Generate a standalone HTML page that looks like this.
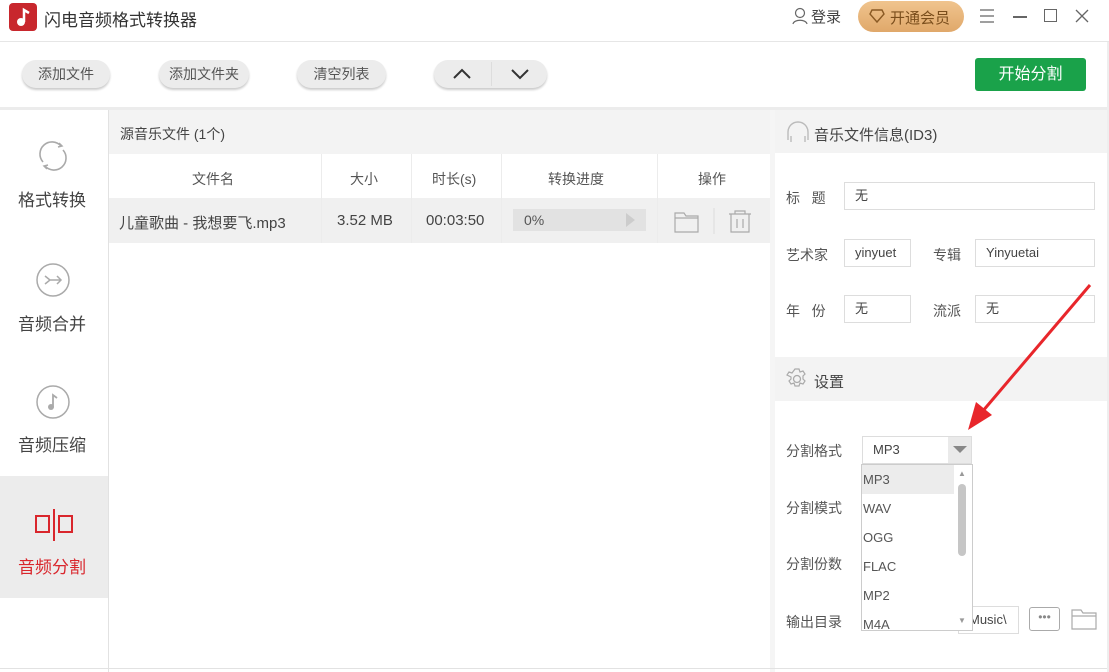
<!DOCTYPE html>
<html><head><meta charset="utf-8"><style>
*{margin:0;padding:0;box-sizing:border-box}
body{width:1109px;height:672px;overflow:hidden;background:#fff;font-family:"Liberation Sans","Noto Sans CJK SC",sans-serif;color:#333;position:relative;font-size:14px}
.a{position:absolute}
.btn{position:absolute;top:60px;height:28px;border-radius:14px;background:#ececec;box-shadow:0 2px 2px #ccc;font-size:14px;color:#555;text-align:center;line-height:28px}
.inp{position:absolute;height:28px;border:1px solid #ddd;background:#fff;font-size:13px;line-height:26px;padding-left:10px;color:#444}
.lbl{position:absolute;font-size:14px;color:#555}
.opt{position:absolute;left:863px;font-size:13px;color:#555}
</style></head><body>
<div class="a" style="left:9px;top:3px;width:28px;height:28px;background:#c8272d;border-radius:4px"></div>
<svg class="a" style="left:9px;top:3px" width="28" height="28"><circle cx="12" cy="19" r="4" fill="#fff"/><path d="M15 19V7l5 3" stroke="#fff" stroke-width="2.5" fill="none"/></svg>
<div class="a" style="left:44px;top:6px;font-size:17px;color:#333">闪电音频格式转换器</div>
<svg class="a" style="left:792px;top:7px" width="16" height="18"><circle cx="8" cy="6" r="4.5" stroke="#666" fill="none" stroke-width="1.2"/><path d="M1 17c1-5 13-5 14 0" stroke="#666" fill="none" stroke-width="1.2"/></svg>
<div class="a" style="left:811px;top:6px;font-size:15px;color:#444">登录</div>
<div class="a" style="left:858px;top:1px;width:106px;height:31px;border-radius:16px;background:linear-gradient(#f0c48e,#e0a86a)"></div>
<svg class="a" style="left:869px;top:8px" width="16" height="16"><path d="M3 2h10l2 4-7 8-7-8z" stroke="#8a5a24" fill="none" stroke-width="1.4"/></svg>
<div class="a" style="left:890px;top:7px;font-size:15px;color:#7a4e1c">开通会员</div>
<svg class="a" style="left:980px;top:9px" width="14" height="14"><path d="M0 1h14M0 7h14M0 13h14" stroke="#666" stroke-width="1.2"/></svg>
<div class="a" style="left:1013px;top:16px;width:14px;height:1.5px;background:#666"></div>
<div class="a" style="left:1044px;top:9px;width:13px;height:13px;border:1.3px solid #666"></div>
<svg class="a" style="left:1075px;top:9px" width="14" height="14"><path d="M1 1l12 12M13 1L1 13" stroke="#666" stroke-width="1.3"/></svg>
<div class="a" style="left:0;top:41px;width:1109px;height:1px;background:#e6e6e6"></div>
<div class="btn" style="left:22px;width:88px">添加文件</div>
<div class="btn" style="left:159px;width:90px">添加文件夹</div>
<div class="btn" style="left:297px;width:89px">清空列表</div>
<div class="btn" style="left:434px;width:113px"></div>
<div class="a" style="left:491px;top:62px;width:1px;height:24px;background:#ddd"></div>
<svg class="a" style="left:452px;top:66px" width="80" height="16"><path d="M2 12l8-8 8 8M60 4l8 8 8-8" stroke="#333" stroke-width="2" fill="none"/></svg>
<div class="a" style="left:975px;top:58px;width:111px;height:33px;background:#1aa24a;border-radius:3px;color:#fff;font-size:16px;text-align:center;line-height:33px">开始分割</div>
<div class="a" style="left:0;top:107px;width:1109px;height:3px;background:#ececec"></div>
<div class="a" style="left:0;top:110px;width:108px;height:562px;background:#fff"></div>
<div class="a" style="left:108px;top:110px;width:1px;height:562px;background:#e2e2e2"></div>
<svg class="a" style="left:35px;top:138px" width="36" height="36"><path d="M8 24A12 12 0 0 1 26 8M28 12A12 12 0 0 1 10 28" stroke="#aaa" stroke-width="1.6" fill="none"/><path d="M24 5l3 3-4 1M12 31l-3-3 4-1" stroke="#aaa" stroke-width="1.5" fill="none"/></svg>
<div class="a" style="left:18px;top:186px;font-size:17px;color:#444">格式转换</div>
<svg class="a" style="left:35px;top:262px" width="36" height="36"><circle cx="18" cy="18" r="16" stroke="#aaa" stroke-width="1.5" fill="none"/><path d="M10 14l5 4-5 4M14 18h12M22 14l4 4-4 4" stroke="#aaa" stroke-width="1.5" fill="none"/></svg>
<div class="a" style="left:18px;top:310px;font-size:17px;color:#444">音频合并</div>
<svg class="a" style="left:35px;top:384px" width="36" height="36"><circle cx="18" cy="18" r="16" stroke="#aaa" stroke-width="1.5" fill="none"/><circle cx="16" cy="23" r="3" fill="#aaa"/><path d="M18 23V11l4 3" stroke="#aaa" stroke-width="1.8" fill="none"/></svg>
<div class="a" style="left:18px;top:431px;font-size:17px;color:#444">音频压缩</div>
<div class="a" style="left:0;top:476px;width:108px;height:122px;background:#ececec"></div>
<svg class="a" style="left:34px;top:508px" width="40" height="34"><rect x="2" y="8" width="13" height="16" stroke="#d9262c" stroke-width="2" fill="none"/><rect x="25" y="8" width="13" height="16" stroke="#d9262c" stroke-width="2" fill="none"/><path d="M20 1v32" stroke="#d9262c" stroke-width="2"/></svg>
<div class="a" style="left:18px;top:553px;font-size:17px;color:#d9262c">音频分割</div>
<div class="a" style="left:109px;top:110px;width:661px;height:44px;background:#f3f3f3"></div>
<div class="a" style="left:120px;top:124px;font-size:14px;color:#444">源音乐文件 (1个)</div>
<div class="a" style="left:109px;top:198px;width:661px;height:45px;background:#f0f0f0"></div>
<div class="a" style="left:321px;top:154px;width:1px;height:89px;background:#ececec"></div>
<div class="a" style="left:411px;top:154px;width:1px;height:89px;background:#ececec"></div>
<div class="a" style="left:501px;top:154px;width:1px;height:89px;background:#ececec"></div>
<div class="a" style="left:657px;top:154px;width:1px;height:89px;background:#ececec"></div>
<div class="a" style="left:192px;top:169px;font-size:14px;color:#555">文件名</div>
<div class="a" style="left:350px;top:169px;font-size:14px;color:#555">大小</div>
<div class="a" style="left:432px;top:169px;font-size:14px;color:#555">时长(s)</div>
<div class="a" style="left:548px;top:169px;font-size:14px;color:#555">转换进度</div>
<div class="a" style="left:698px;top:169px;font-size:14px;color:#555">操作</div>
<div class="a" style="left:119px;top:212px;font-size:15px;color:#444">儿童歌曲 - 我想要飞.mp3</div>
<div class="a" style="left:337px;top:212px;font-size:15px;color:#444">3.52 MB</div>
<div class="a" style="left:426px;top:212px;font-size:15px;color:#444">00:03:50</div>
<div class="a" style="left:513px;top:209px;width:133px;height:22px;background:#e2e2e2"></div>
<div class="a" style="left:524px;top:212px;font-size:14px;color:#555">0%</div>
<div class="a" style="left:626px;top:213px;width:0;height:0;border-left:9px solid #ccc;border-top:7px solid transparent;border-bottom:7px solid transparent"></div>
<svg class="a" style="left:674px;top:208px" width="80" height="26"><path d="M1 5h9l2 3h12v16H1z" stroke="#aaa" stroke-width="1.2" fill="none"/><path d="M1 10h23" stroke="#aaa" stroke-width="1.2"/><path d="M40 0v26" stroke="#ddd"/><path d="M55 6h22M61 6V3h10v3M57 6v18h18V6M63 11v9M69 11v9" stroke="#aaa" stroke-width="1.2" fill="none"/></svg>
<div class="a" style="left:770px;top:110px;width:5px;height:562px;background:#f5f5f5"></div>
<div class="a" style="left:775px;top:110px;width:332px;height:43px;background:#f3f3f3"></div>
<svg class="a" style="left:786px;top:120px" width="24" height="24"><path d="M2 20v-8a10 10 0 0 1 20 0v8" stroke="#bbb" stroke-width="1.4" fill="none"/><path d="M5 16v6M19 16v6" stroke="#bbb" stroke-width="1.4"/></svg>
<div class="a" style="left:814px;top:124px;font-size:15px;color:#444">音乐文件信息(ID3)</div>
<div class="lbl" style="left:786px;top:188px">标&nbsp;&nbsp;&nbsp;题</div>
<div class="inp" style="left:844px;top:182px;width:251px">无</div>
<div class="lbl" style="left:786px;top:245px">艺术家</div>
<div class="inp" style="left:844px;top:239px;width:67px">yinyuet</div>
<div class="lbl" style="left:933px;top:245px">专辑</div>
<div class="inp" style="left:975px;top:239px;width:120px">Yinyuetai</div>
<div class="lbl" style="left:786px;top:301px">年&nbsp;&nbsp;&nbsp;份</div>
<div class="inp" style="left:844px;top:295px;width:67px">无</div>
<div class="lbl" style="left:933px;top:301px">流派</div>
<div class="inp" style="left:975px;top:295px;width:120px">无</div>
<div class="a" style="left:775px;top:357px;width:332px;height:44px;background:#f3f3f3"></div>
<svg class="a" style="left:786px;top:368px" width="22" height="22"><circle cx="11" cy="11" r="3.5" stroke="#aaa" fill="none" stroke-width="1.3"/><path d="M9 1h4l1 3 3-1 2 3-2 2 0 3 2 2-2 3-3-1-1 3h-4l-1-3-3 1-2-3 2-2V9L1 7l2-3 3 1z" stroke="#aaa" fill="none" stroke-width="1.2"/></svg>
<div class="a" style="left:814px;top:371px;font-size:15px;color:#444">设置</div>
<div class="lbl" style="left:786px;top:441px">分割格式</div>
<div class="lbl" style="left:786px;top:498px">分割模式</div>
<div class="lbl" style="left:786px;top:554px">分割份数</div>
<div class="lbl" style="left:786px;top:612px">输出目录</div>
<div class="inp" style="left:862px;top:436px;width:110px;height:28px">MP3</div>
<div class="a" style="left:948px;top:437px;width:23px;height:26px;background:#eaeaea"></div>
<div class="a" style="left:953px;top:446px;width:0;height:0;border-top:7px solid #888;border-left:7px solid transparent;border-right:7px solid transparent"></div>
<div class="inp" style="left:958px;top:606px;width:61px">Music\</div>
<div class="a" style="left:1029px;top:607px;width:31px;height:24px;border:1.5px solid #aaa;border-radius:3px;text-align:center;font-size:12px;line-height:18px;color:#888">•••</div>
<svg class="a" style="left:1071px;top:608px" width="26" height="22"><path d="M1 2h9l2 3h13v16H1z" stroke="#aaa" stroke-width="1.2" fill="none"/><path d="M1 8h24" stroke="#aaa" stroke-width="1.2"/></svg>
<div class="a" style="left:861px;top:464px;width:112px;height:167px;background:#fff;border:1px solid #ccc"></div>
<div class="a" style="left:862px;top:465px;width:92px;height:29px;background:#ececec"></div>
<div class="a" style="left:958px;top:484px;width:8px;height:72px;border-radius:4px;background:#c6c6c6"></div>
<div class="a" style="left:958px;top:469px;font-size:8px;color:#999">▲</div>
<div class="a" style="left:958px;top:616px;font-size:8px;color:#999">▼</div>
<div class="opt" style="top:472px">MP3</div>
<div class="opt" style="top:501px">WAV</div>
<div class="opt" style="top:530px">OGG</div>
<div class="opt" style="top:559px">FLAC</div>
<div class="opt" style="top:588px">MP2</div>
<div class="opt" style="top:617px">M4A</div>
<div class="a" style="left:0;top:668px;width:1109px;height:1px;background:#e2e2e2"></div>
<div class="a" style="left:1107px;top:42px;width:2px;height:630px;background:#eee"></div>
<svg class="a" style="left:960px;top:280px" width="140" height="160"><path d="M130 5L22 132" stroke="#e8262b" stroke-width="3"/><path d="M8 150l8-28 16 13z" fill="#e8262b"/></svg>
</body></html>
